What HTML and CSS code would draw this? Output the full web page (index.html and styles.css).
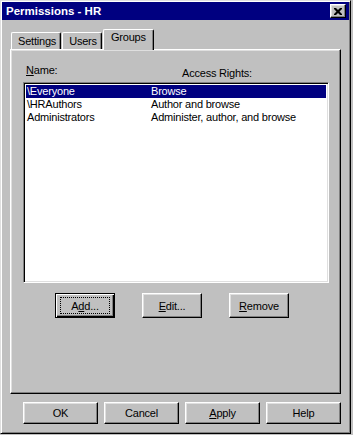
FILE: index.html
```html
<!DOCTYPE html>
<html lang="en">
<head>
<meta charset="UTF-8">
<meta name="viewport" content="width=device-width, initial-scale=1.0">
<title>Permissions - HR</title>
<link rel="stylesheet" href="styles.css">
</head>
<body>
<div class="window">
    <div class="titlebar">
        <span class="title">Permissions - HR</span>
        <button class="close-button" aria-label="Close">
            <svg width="8" height="7" viewBox="0 0 8 7">
                <path d="M0 0h2l2 2 2-2h2v1l-2.5 2.5 2.5 2.5v1h-2l-2-2-2 2h-2v-1l2.5-2.5-2.5-2.5z" fill="#000"/>
            </svg>
        </button>
    </div>

    <div class="tabs">
        <div class="tab">Settings</div>
        <div class="tab">Users</div>
        <div class="tab tab-active">Groups</div>
    </div>

    <div class="panel">
        <div class="labels">
            <span class="label-name"><u>N</u>ame:</span>
            <span class="label-rights">Access Rights:</span>
        </div>
        <div class="listbox">
            <div class="row selected">
                <span class="col-name">\Everyone</span>
                <span class="col-rights">Browse</span>
            </div>
            <div class="row">
                <span class="col-name">\HRAuthors</span>
                <span class="col-rights">Author and browse</span>
            </div>
            <div class="row">
                <span class="col-name">Administrators</span>
                <span class="col-rights">Administer, author, and browse</span>
            </div>
        </div>
        <div class="list-buttons">
            <button class="btn btn-default"><span class="focus">A<u>d</u>d...</span></button>
            <button class="btn"><u>E</u>dit...</button>
            <button class="btn"><u>R</u>emove</button>
        </div>
    </div>

    <div class="dialog-buttons">
        <button class="btn btn-wide">OK</button>
        <button class="btn btn-wide">Cancel</button>
        <button class="btn btn-wide"><u>A</u>pply</button>
        <button class="btn btn-wide">Help</button>
    </div>
</div>
</body>
</html>
```

FILE: styles.css
```css
body {
    margin: 0;
    background: #c0c0c0;
    font-family: "Liberation Sans", Arial, sans-serif;
    font-size: 11px;
    letter-spacing: -0.2px;
    color: #000;
}
.window {
    width: 351px;
    height: 434px;
    box-sizing: border-box;
    padding: 1px;
    background: #c0c0c0;
    border: 1px solid;
    border-color: #dfdfdf #000 #000 #dfdfdf;
    box-shadow: inset 1px 1px #fff, inset -1px -1px #808080;
}
.titlebar {
    display: flex;
    align-items: center;
    justify-content: space-between;
    height: 18px;
    padding: 0 3px 0 4px;
    background: #000080;
}
.title {
    color: #fff;
    font-weight: bold;
    font-size: 11.5px;
    letter-spacing: 0;
}
.close-button {
    display: flex;
    align-items: center;
    justify-content: center;
    width: 16px;
    height: 14px;
    padding: 0;
    background: #c0c0c0;
    border: 1px solid;
    border-color: #fff #000 #000 #fff;
    box-shadow: inset -1px -1px #808080, inset 1px 1px #dfdfdf;
}

/* tabs */
.tabs {
    display: flex;
    align-items: flex-end;
    height: 20px;
    margin: 9px 0 0 9px;
}
.tab {
    height: 17px;
    box-sizing: border-box;
    padding: 2px 4px 0 6px;
    border-top: 1px solid #fff;
    border-left: 1px solid #fff;
    border-right: 1px solid #000;
    border-radius: 2px 2px 0 0;
    box-shadow: inset -1px 0 #808080;
    line-height: 13px;
}
.tab + .tab {
    margin-left: 1px;
}
.tab-active {
    position: relative;
    z-index: 1;
    height: 21px;
    margin-bottom: -1px;
    padding: 1px 7px 0 7px;
    background: #c0c0c0;
}

/* panel */
.panel {
    width: 331px;
    height: 345px;
    box-sizing: border-box;
    margin-left: 8px;
    border: 1px solid;
    border-color: #fff #000 #000 #fff;
    box-shadow: inset -1px -1px #808080, inset 1px 1px #dfdfdf;
    padding: 1px;
}
.labels {
    display: flex;
    align-items: flex-start;
    height: 31px;
    padding: 13px 0 0 14px;
    box-sizing: border-box;
    line-height: 13px;
}
.label-name {
    width: 156px;
}
.label-rights {
    margin-top: 3px;
}
.listbox {
    width: 306px;
    height: 201px;
    box-sizing: border-box;
    margin-left: 11px;
    background: #fff;
    border: 1px solid;
    border-color: #808080 #fff #fff #808080;
    box-shadow: inset 1px 1px #000, inset -1px -1px #dfdfdf;
    padding: 2px 2px;
}
.row {
    display: flex;
    height: 13px;
    line-height: 13px;
    padding-left: 1px;
}
.row.selected {
    background: #000080;
    color: #fff;
}
.col-name {
    width: 124px;
}
.list-buttons {
    display: flex;
    margin: 10px 0 0 43px;
}
.btn {
    height: 25px;
    width: 60px;
    padding: 0;
    font-family: inherit;
    font-size: 11px;
    letter-spacing: -0.2px;
    color: #000;
    background: #c0c0c0;
    border: 1px solid;
    border-color: #fff #000 #000 #fff;
    box-shadow: inset -1px -1px #808080, inset 1px 1px #dfdfdf;
}
.list-buttons .btn + .btn {
    margin-left: 27px;
}
.btn-default {
    border: 1px solid #000;
    box-shadow: inset 1px 1px #fff, inset -1px -1px #000, inset -2px -2px #808080;
    display: flex;
    align-items: center;
    justify-content: center;
}
.focus {
    display: flex;
    align-items: center;
    justify-content: center;
    width: 48px;
    height: 15px;
    outline: 1px dotted #000;
}

/* dialog buttons */
.dialog-buttons {
    display: flex;
    gap: 6px;
    margin: 8px 0 0 21px;
}
.btn-wide {
    width: 75px;
    height: 22px;
}
```
